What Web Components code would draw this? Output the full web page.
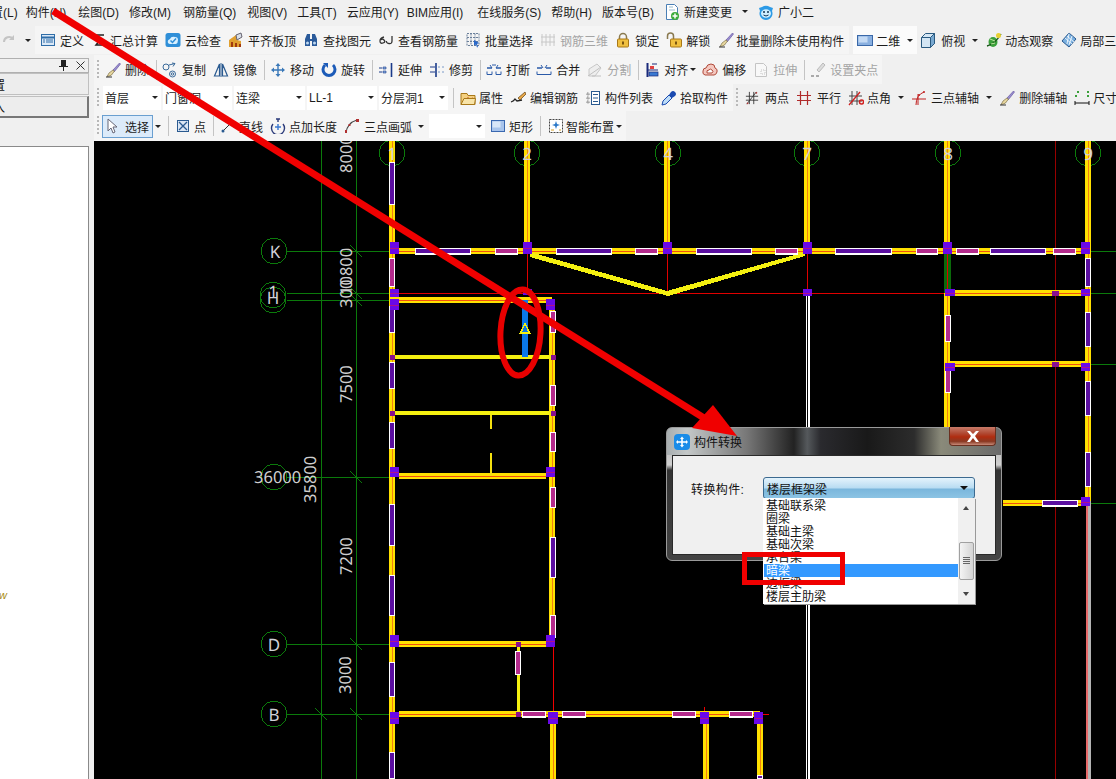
<!DOCTYPE html>
<html lang="zh">
<head>
<meta charset="utf-8">
<title>构件转换</title>
<style>
  html, body { margin: 0; padding: 0; background: #f0f0f0; overflow: hidden; }
</style>
</head>
<body>
<gld-app>
  <menu-bar slot="menu">
    <span style="margin-left:-9px">置(L)</span><span style="margin-left:-2px">构件(N)</span><span style="margin-left:2px">绘图(D)</span><span>修改(M)</span><span style="margin-left:2px">钢筋量(Q)</span><span style="margin-left:1px">视图(V)</span><span>工具(T)</span><span>云应用(Y)</span><span style="margin-left:-2px">BIM应用(I)</span><span style="margin-left:4px">在线服务(S)</span><span>帮助(H)</span><span>版本号(B)</span>
    <tool-btn icon="newdoc">新建变更</tool-btn><tool-arrow></tool-arrow>
    <tool-btn icon="xiaoer">广小二</tool-btn>
  </menu-bar>

  <tool-row slot="top" style="height:28px">
    <tool-icon name="redo" style="margin-left:1px"></tool-icon>
    <tool-arrow style="margin:0 4px 0 8px"></tool-arrow>
    <tool-bar style="--pad:5px">
      <tool-btn icon="define">定义</tool-btn>
      <tool-btn icon="sum" style="--tg:2px;margin-left:1px">汇总计算</tool-btn>
      <tool-btn icon="cloud">云检查</tool-btn>
      <tool-btn icon="flat">平齐板顶</tool-btn>
      <tool-btn icon="find">查找图元</tool-btn>
      <tool-btn icon="rebar">查看钢筋量</tool-btn>
      <tool-btn icon="batch">批量选择</tool-btn>
      <tool-btn icon="r3d" disabled>钢筋三维</tool-btn>
      <tool-btn icon="lock">锁定</tool-btn>
      <tool-btn icon="unlock">解锁</tool-btn>
      <tool-btn icon="erase" style="--tg:2px;margin-left:1px">批量删除未使用构件</tool-btn>
    </tool-bar>
    <tool-bar style="--pad:4px;--bg:#fbfbfb;margin-left:4px;width:64px;box-sizing:border-box">
      <tool-btn icon="view2d" style="--tg:3px">二维</tool-btn><tool-arrow></tool-arrow>
    </tool-bar>
    <tool-btn icon="cube" style="margin-left:3px;--tg:5px">俯视</tool-btn><tool-arrow style="margin:0 8px 0 7px"></tool-arrow>
    <tool-btn icon="orbit" style="--tg:3px">动态观察</tool-btn>
    <tool-btn icon="local3d" style="margin-left:8px;--tg:3px">局部三维</tool-btn>
  </tool-row>

  <side-panel slot="side"></side-panel>

  <tool-row slot="rows" style="height:30px;padding-top:1px">
    <tool-bar grip style="--gap:7px">
      <tool-btn icon="erase" style="margin-left:-1px">删除</tool-btn><tool-sep></tool-sep>
      <tool-btn icon="copy" style="margin-left:-1px">复制</tool-btn>
      <tool-btn icon="mirror">镜像</tool-btn><tool-sep></tool-sep>
      <tool-btn icon="move" style="margin-left:-1px">移动</tool-btn>
      <tool-btn icon="rotate">旋转</tool-btn><tool-sep></tool-sep>
      <tool-btn icon="extend" style="margin-left:-1px">延伸</tool-btn>
      <tool-btn icon="trim">修剪</tool-btn><tool-sep></tool-sep>
      <tool-btn icon="break" style="margin-left:-1px">打断</tool-btn>
      <tool-btn icon="merge" style="margin-left:-1px">合并</tool-btn>
      <tool-btn icon="split" disabled>分割</tool-btn><tool-sep></tool-sep>
      <tool-btn icon="align" style="margin-left:-1px">对齐<tool-arrow style="margin-left:-2px"></tool-arrow></tool-btn>
      <tool-btn icon="offset" style="margin-left:-1px">偏移</tool-btn>
      <tool-btn icon="stretch" disabled>拉伸</tool-btn><tool-sep></tool-sep>
      <tool-btn icon="grips" disabled style="margin-left:-1px">设置夹点</tool-btn>
    </tool-bar>
  </tool-row>

  <tool-row slot="rows" style="height:27px">
    <tool-bar grip style="--gap:2px">
      <tool-combo style="width:58px;margin-left:2px">首层</tool-combo>
      <tool-combo style="width:69px">门窗洞</tool-combo>
      <tool-combo style="width:71px">连梁</tool-combo>
      <tool-combo style="width:70px">LL-1</tool-combo>
      <tool-combo style="width:69px">分层洞1</tool-combo>
      <tool-sep style="margin:0 4px 0 3px"></tool-sep>
      <tool-btn icon="attr" style="--tg:3px">属性</tool-btn>
      <tool-btn icon="editbar" style="margin-left:5px">编辑钢筋</tool-btn>
      <tool-btn icon="list" style="margin-left:5px">构件列表</tool-btn>
      <tool-btn icon="pick" style="margin-left:6px;--tg:3px;margin-right:1px">拾取构件</tool-btn>
    </tool-bar>
    <tool-bar grip style="--bg:transparent;--gap:7px">
      <tool-btn icon="twopt" style="--tg:6px;--iw:14px">两点</tool-btn>
      <tool-btn icon="parallel" style="--tg:5px">平行</tool-btn>
      <tool-btn icon="angle" style="--tg:3px">点角<tool-arrow style="margin-left:4px"></tool-arrow></tool-btn>
      <tool-btn icon="arcaxis">三点辅轴<tool-arrow style="margin-left:3px"></tool-arrow></tool-btn>
      <tool-btn icon="erase">删除辅轴</tool-btn>
      <tool-btn icon="dim" style="--tg:3px">尺寸</tool-btn>
    </tool-bar>
  </tool-row>

  <tool-row slot="rows" style="height:30px">
    <tool-bar grip style="--gap:7px">
      <tool-btn icon="cursor" active style="margin-left:-4px">选择</tool-btn><tool-arrow style="margin-left:-5px"></tool-arrow><tool-sep></tool-sep>
      <tool-btn icon="point" style="--tg:3px">点</tool-btn><tool-sep></tool-sep>
      <tool-btn icon="line" style="--tg:3px">直线</tool-btn>
      <tool-btn icon="ptlen" style="--tg:3px">点加长度</tool-btn>
      <tool-btn icon="arc">三点画弧<tool-arrow style="margin-left:2px"></tool-arrow></tool-btn>
      <tool-combo style="width:56px;margin-left:-2px"></tool-combo>
      <tool-btn icon="rect" style="margin-left:-2px;--tg:3px">矩形</tool-btn><tool-sep></tool-sep>
      <tool-btn icon="smart" style="margin-left:1px;--tg:2px">智能布置<tool-arrow></tool-arrow></tool-btn>
    </tool-bar>
  </tool-row>

  <cad-canvas slot="canvas"></cad-canvas>
  <convert-dialog slot="over"></convert-dialog>
  <red-marks slot="over"></red-marks>
</gld-app>

<script>
// icons, all on a 16x16 box
const ICONS = {
  redo: '<path d="M3 10a5 5 0 0 1 9-3" fill="none" stroke="#c4c4c4" stroke-width="2"/><path d="M13 3v5H8z" fill="#c4c4c4"/>',
  newdoc: '<path d="M2.5.5h8l3 3v12h-11z" fill="#fff" stroke="#4a7fb5"/><path d="M5 3h4M5 6h6" stroke="#9bc"/><circle cx="11" cy="12" r="4" fill="#3cab3c"/><path d="M11 9.5v5M8.500 12h5" stroke="#fff" stroke-width="1.500"/>',
  xiaoer: '<path d="M1 4l3-1a8 8 0 0 1 8 0l3 1-1 3a6.500 6.500 0 1 1-12 0z" fill="#2c9ae6"/><ellipse cx="8" cy="9.500" rx="5" ry="4.200" fill="#cfeeff"/><circle cx="6" cy="8" r="1" fill="#135"/><circle cx="10" cy="8" r="1" fill="#135"/><path d="M5.500 11q2.500 2 5 0" stroke="#135" fill="none"/>',
  define: '<rect x="1.500" y="2.500" width="13" height="11" fill="#dbe9f7" stroke="#2f6da8"/><path d="M1.500 5.500h13" stroke="#2f6da8" stroke-width="2"/><path d="M6 8h7M6 10h7M3 8h2M3 10h2" stroke="#2f6da8"/>',
  sum: '<path d="M12 3H4l4 5-4 5h8" fill="none" stroke="#222" stroke-width="1.500"/>',
  cloud: '<rect x=".5" y="1" width="15" height="14" rx="2.500" fill="#2f8fd8"/><path d="M3 11q-1-3 2-4 1-3 5-2 3 0 3 3t-2 4H5q-1 0-2-1z" fill="#d8f0ff"/><path d="M5.500 8.500l2 2 3.500-4" fill="none" stroke="#2f8fd8" stroke-width="1.500"/>',
  flat: '<path d="M1 15V8l7-5 5-2 1 4-5 3 4 1v6z" fill="#e0a030"/><path d="M8 3l5-2 1 4-5 3z" fill="#d9dfe8" stroke="#667"/><path d="M3 15v-5h2v5zM7 15v-4h2v4zM11 15v-3h2v3z" fill="#a03a10"/>',
  find: '<path d="M2 7l2-5h3v5h2V2h3l2 5v7H9V9H7v5H2z" fill="#2a5a9a"/><circle cx="4.500" cy="11" r="1.500" fill="#bfd8f0"/><circle cx="11.500" cy="11" r="1.500" fill="#bfd8f0"/>',
  rebar: '<path d="M6 5Q2 6 2 9t3 2 1-3-3 0M14 4v5q0 3-3 2.500T8.500 9" fill="none" stroke="#333" stroke-width="1.300"/>',
  batch: '<path d="M2 1.500h12v12H2zM2 5.500h12M2 9.500h12M6 1.500v12M10 1.500v12" fill="none" stroke="#6a7f9a" stroke-dasharray="2 1"/><path d="M9 8l5 3-2 1 1 3-1 .500-1-3-2 1z" fill="#2a68c8"/>',
  r3d: '<path d="M2 2v12M6 2v12M10 2v12M14 2v12M1 5h14M1 10h14" stroke="#c8c8c8"/>',
  lock: '<path d="M4.500 7V5a3.500 3.500 0 0 1 7 0v2" fill="none" stroke="#8a7a50" stroke-width="1.500"/><rect x="2.500" y="7" width="11" height="8" rx="1" fill="#f0c040" stroke="#a87818"/><rect x="7" y="9.500" width="2" height="3" fill="#7a5510"/>',
  unlock: '<path d="M1.500 7V4a3 3 0 0 1 6 0v3" fill="none" stroke="#8a7a50" stroke-width="1.500"/><rect x="4.500" y="7" width="11" height="8" rx="1" fill="#f0c040" stroke="#a87818"/><rect x="9" y="9.500" width="2" height="3" fill="#7a5510"/>',
  erase: '<path d="M14.500 1L8 8l1.500 1.500L15.500 2z" fill="#9a8fd0" stroke="#5a4a9a" stroke-width=".6"/><path d="M8 8l-4 3q-1 2-2 3.500 3-.5 4.500-1.500l3-4z" fill="#e8d8a0" stroke="#6a5a30" stroke-width=".6"/><path d="M1 15h6" stroke="#333"/>',
  view2d: '<rect x=".5" y="3.500" width="15" height="10" fill="#8ab0e0" stroke="#3a68a8"/><rect x="1.500" y="4.500" width="9" height="6" fill="#c4daf4"/>',
  cube: '<path d="M1.500 5.500l4-4h9v10l-4 4h-9z" fill="#d4e6f4" stroke="#2a5a80"/><path d="M1.500 5.500h9v10l4-4v-10l-4 4" fill="#78a8d0" stroke="#2a5a80"/>',
  orbit: '<ellipse cx="7" cy="10" rx="4.500" ry="5" fill="#3aa03a"/><path d="M1 14Q9 12 15 2" fill="none" stroke="#1a5a1a" stroke-width="1.400"/><circle cx="12.500" cy="3.500" r="2.500" fill="#e8d030"/><path d="M4 7l5 2M5 12l4-1" stroke="#bfe8a0"/>',
  local3d: '<path d="M1 9l7-8 7 6-7 8z" fill="#7ab0e0" stroke="#2a5a90"/><path d="M4 6l7 6M6 4l7 6M8 1.500L6 12M11 4l-3 9" stroke="#fff" stroke-width=".8"/>',
  copy: '<circle cx="4" cy="5" r="3" fill="none" stroke="#3a6a9a"/><circle cx="10.500" cy="12" r="3" fill="none" stroke="#3a6a9a"/><circle cx="10.500" cy="12" r="1.200" fill="none" stroke="#3a6a9a"/><path d="M7 3l6-1.500M13 1.500l-2 3M13 1.500l-3-.500" stroke="#3a6a9a" fill="none"/>',
  mirror: '<path d="M6.500 2L1.500 14h5zM9.500 2l5 12h-5z" fill="none" stroke="#2a5a90" stroke-width="1.200"/><path d="M8 1v14" stroke="#2a5a90"/>',
  move: '<path d="M8 1l2.500 3H8.700v3.300H12V5.500L15 8l-3 2.500V8.700H8.700V12h1.800L8 15l-2.500-3h1.800V8.700H4v1.800L1 8l3-2.500v1.800h3.300V4H5.500z" fill="#3a78b8"/>',
  rotate: '<path d="M4 3a6 6 0 1 0 8 0" fill="none" stroke="#1c5bb8" stroke-width="3"/><path d="M2 1h5v5z" fill="#1c5bb8"/>',
  extend: '<path d="M13.500 1v14" stroke="#1a3a8a" stroke-width="1.600"/><path d="M1 6h3M1 10h3" stroke="#1a3a8a"/><path d="M5 5h3v2H5zM5 9h3v2H5z" fill="#8ab0e0" stroke="#1a3a8a" stroke-width=".6"/>',
  trim: '<path d="M7 1v14" stroke="#1a3a8a" stroke-width="1.600"/><path d="M1 5h5M1 10h5" stroke="#1a3a8a"/><path d="M9 5h2M13 5h2M9 10h2M13 10h2" stroke="#7a9ac8"/>',
  break: '<path d="M1 9.500v3h5v-3M10 9.500v3h5v-3" fill="none" stroke="#2a5aa8"/><path d="M1 6h5M10 6h5" stroke="#2a5aa8" stroke-width="1.300"/><path d="M4 3l2 3M12 3l-2 3M6 3h4" stroke="#2a5aa8"/>',
  merge: '<path d="M1 9.500v3h14v-3" fill="none" stroke="#2a5aa8"/><path d="M1 6h5M10 6h5" stroke="#2a5aa8" stroke-width="1.300"/><path d="M5 3l2 3M11 3l-2 3" stroke="#2a5aa8"/>',
  split: '<path d="M2 14V7l8-5 4 4-6 8z" fill="#eee" stroke="#c8c8c8"/><path d="M1 14l13-9M5 14h9" stroke="#c0c0c0"/>',
  align: '<path d="M3.500 1v14" stroke="#1a2a7a" stroke-width="2"/><path d="M4 8h10M8 2h5" stroke="#1a2a7a"/><rect x="5" y="10" width="9" height="4" fill="#3a78d0" stroke="#1a2a7a" stroke-width=".7"/><rect x="6" y="4" width="4" height="3" fill="#e04040"/>',
  offset: '<path d="M3 13q-3-1-2-4 0-3 3-3 1-4 5-4t4 4q3 1 2 4t-3 3z" fill="#f4c8c0" stroke="#b04a3a"/><path d="M5 11q-1-3 2-3 1-2 3 0 2 1 0 3z" fill="#fff" stroke="#b04a3a"/>',
  stretch: '<path d="M2.500 1.500h8l3 3v10h-11z" fill="#f8f8f8" stroke="#c4c4c4"/><path d="M8 8h4v4H8z" fill="none" stroke="#c4c4c4" stroke-dasharray="1 1"/>',
  grips: '<path d="M13 1l-6 7 2 2 6-7z" fill="#ddd" stroke="#bbb"/><path d="M1 14h3M6 14h3" stroke="#aaa" stroke-width="2"/>',
  attr: '<path d="M1 3.500h6l1 2h7v9H1z" fill="#f4d080" stroke="#a87818"/><path d="M4 11l4-3 1 2 4-2" fill="none" stroke="#c04020" stroke-width="1.200"/><path d="M1 14.500l3-6h11.500l-1 6z" fill="#f8e4a8" stroke="#a87818"/>',
  editbar: '<path d="M1 12q3-1 4-3l2 2 5-1" fill="none" stroke="#222" stroke-width="1.300"/><path d="M15 2L8 8l2 2 6-6z" fill="#e8a848" stroke="#604010" stroke-width=".7"/>',
  list: '<path d="M2 3h2v2H2zM2 7h2v2H2zM2 11h2v2H2z" fill="none" stroke="#555" stroke-width=".7" stroke-dasharray="1 .5"/><rect x="6.500" y="1.500" width="8" height="13" fill="#fff" stroke="#2a5a90"/><path d="M8 4.500h5M8 8h5M8 11.500h5" stroke="#2a5a90"/>',
  pick: '<path d="M14 2q-2-2-4 0l-2 3 3 3 3-2q2-2 0-4z" fill="#1a4ab0"/><path d="M8 5L2 11l-1 4 4-1 6-6z" fill="#bcdcf8" stroke="#1a4ab0"/>',
  twopt: '<path d="M2 15L13 1M1 6h14M1 10.500h14" stroke="#333" fill="none"/><path d="M5 1v14M10 1v14" stroke="#333"/><circle cx="3" cy="14" r="1" fill="#a33"/><circle cx="13" cy="2" r="1" fill="#a33"/>',
  parallel: '<path d="M4.500 1v14M11.500 1v14M1 5.500h14M1 10.500h14" stroke="#b02a2a" stroke-width="1.200"/>',
  angle: '<path d="M4 1v14M9 1v14M1 6h13M1 11h13" stroke="#444"/><path d="M1 15L12 2" stroke="#d02020" stroke-width="1.300"/><circle cx="13.500" cy="12" r="2" fill="none" stroke="#d02020" stroke-width="1.500"/>',
  arcaxis: '<path d="M5 15Q5 5 13 2M1 9h14M7 4v11" fill="none" stroke="#c02020"/><circle cx="13" cy="2" r="1" fill="#c02020"/><circle cx="8" cy="5" r="1" fill="#c02020"/>',
  dim: '<path d="M1 11v4M15 11v4M1 13h14" stroke="#111"/><path d="M3 2h2M13 2h2M1 6h2M13 6h2" stroke="#3aa03a" stroke-width="2"/>',
  cursor: '<path d="M4 1v12l3-3 2 5 2-1-2-5h4z" fill="#fff" stroke="#667"/>',
  point: '<rect x="2.500" y="2.500" width="11" height="11" fill="#dbe6f4" stroke="#2a5a90"/><path d="M4 4l8 8M12 4l-8 8" stroke="#2a5a90" stroke-width="1.300"/>',
  line: '<path d="M2 14L14 2" stroke="#333"/><circle cx="3" cy="13" r="1.500" fill="#2a5a90"/>',
  ptlen: '<path d="M3 6a6.500 6.500 0 1 0 10 0" fill="none" stroke="#2a3a7a" stroke-width="1.400"/><path d="M8 1v3M6 1h4" stroke="#2a3a7a" stroke-width="1.400"/><path d="M5 9h6M8 6v6" stroke="#3a78d0" stroke-width="1.400"/>',
  arc: '<path d="M2 15Q3 5 13 2" fill="none" stroke="#444" stroke-width="1.200"/><rect x="12" y="1" width="3" height="3" fill="#b03030"/><rect x="1" y="12" width="2" height="3" fill="#b03030"/><rect x="4.500" y="6" width="2" height="2" fill="#b03030"/>',
  rect: '<rect x="1.500" y="2.500" width="13" height="11" fill="#a8c4ec" stroke="#3a68b0"/><rect x="2.500" y="3.500" width="8" height="6" fill="#d8e6f8"/>',
  smart: '<rect x="1.500" y="1.500" width="13" height="13" fill="#fff" stroke="#444" stroke-dasharray="2 1"/><path d="M8 3l1 3 3 1-3 1-1 3-1-3-3-1 3-1z" fill="#2a78c8"/><path d="M3 12h3M11 12h2" stroke="#d8a020"/>'
};

class ToolIcon extends HTMLElement {
  connectedCallback() {
    if (this.shadowRoot) return;
    const root = this.attachShadow({mode: "open"});
    root.innerHTML = `
      <style>
        :host { display: inline-flex; flex: none; width: var(--iw, 16px); height: 16px; }
        svg { display: block; width: 100%; height: 100%; }
      </style>
      <svg viewBox="0 0 16 16">${ICONS[this.getAttribute("name")] || ""}</svg>`;
  }
}
customElements.define("tool-icon", ToolIcon);

class ToolArrow extends HTMLElement {
  connectedCallback() {
    if (this.shadowRoot) return;
    this.attachShadow({mode: "open"}).innerHTML = `
      <style>
        :host { display: inline-block; flex: none; width: 0; height: 0;
                border: 3px solid transparent; border-top: 3px solid #222; border-bottom: 0; vertical-align: middle; }
      </style>`;
  }
}
customElements.define("tool-arrow", ToolArrow);

class ToolSep extends HTMLElement {
  connectedCallback() {
    if (this.shadowRoot) return;
    this.attachShadow({mode: "open"}).innerHTML = `
      <style>
        :host { display: block; flex: none; width: 1px; height: 20px; background: #c4c4c4; margin-right: -1px; }
      </style>`;
  }
}
customElements.define("tool-sep", ToolSep);

class ToolBtn extends HTMLElement {
  connectedCallback() {
    if (this.shadowRoot) return;
    const root = this.attachShadow({mode: "open"});
    root.innerHTML = `
      <style>
        :host { display: inline-flex; flex: none; align-items: center; gap: var(--tg, 4px);
                font: 12px "Liberation Sans", "Noto Sans CJK SC", sans-serif; color: #1c1c1c; white-space: nowrap; }
        :host([disabled]) { color: #a4a4a4; }
        :host([active]) { background: #dcebfa; box-shadow: inset 0 0 0 1px #6a9fd0; height: 23px; padding: 0 2px 0 2px; box-sizing: border-box; width: 51px; --tg: 5px; }
      </style>
      <tool-icon name="${this.getAttribute("icon")}"></tool-icon><slot></slot>`;
  }
}
customElements.define("tool-btn", ToolBtn);

class ToolCombo extends HTMLElement {
  connectedCallback() {
    if (this.shadowRoot) return;
    const root = this.attachShadow({mode: "open"});
    root.innerHTML = `
      <style>
        :host { display: flex; flex: none; align-items: center; justify-content: space-between; height: 24px;
                box-sizing: border-box; padding: 0 3px 0 2px; background: #fff;
                font: 12px "Liberation Sans", "Noto Sans CJK SC", sans-serif; color: #1c1c1c; white-space: nowrap; }
      </style>
      <span><slot></slot></span><tool-arrow></tool-arrow>`;
  }
}
customElements.define("tool-combo", ToolCombo);

class ToolBar extends HTMLElement {
  connectedCallback() {
    if (this.shadowRoot) return;
    const root = this.attachShadow({mode: "open"});
    root.innerHTML = `
      <style>
        :host { display: flex; align-items: center; gap: var(--gap, 7px); height: 100%; flex: none;
                box-sizing: border-box; padding: 0 var(--pad, 4px); background: var(--bg, #f5f5f5); }
        .grip { width: 2px; height: 20px; margin-left: -1px;
                background: repeating-linear-gradient(#b8b8b8 0 2px, transparent 2px 4px); }
        :host(:not([grip])) .grip { display: none; }
      </style>
      <div class="grip"></div><slot></slot>`;
  }
}
customElements.define("tool-bar", ToolBar);

class ToolRow extends HTMLElement {
  connectedCallback() {
    if (this.shadowRoot) return;
    this.attachShadow({mode: "open"}).innerHTML = `
      <style>
        :host { display: flex; align-items: center; box-sizing: border-box; white-space: nowrap;
                font: 12px "Liberation Sans", "Noto Sans CJK SC", sans-serif; color: #1c1c1c; }
        ::slotted(tool-bar) { height: 100%; }
      </style>
      <slot></slot>`;
  }
}
customElements.define("tool-row", ToolRow);

class MenuBar extends HTMLElement {
  connectedCallback() {
    if (this.shadowRoot) return;
    this.attachShadow({mode: "open"}).innerHTML = `
      <style>
        :host { display: flex; align-items: center; gap: 10px; height: 23px; margin-bottom: 3px; white-space: nowrap;
                font: 12px "Liberation Sans", "Noto Sans CJK SC", sans-serif; color: #1c1c1c; }
      </style>
      <slot></slot>`;
  }
}
customElements.define("menu-bar", MenuBar);

class SidePanel extends HTMLElement {
  connectedCallback() {
    if (this.shadowRoot) return;
    this.attachShadow({mode: "open"}).innerHTML = `
      <style>
        :host { display: flex; flex-direction: column; box-sizing: border-box; width: 94px; height: 100%;
                padding: 4px 5px 0 0; background: #f0f0f0; overflow: hidden;
                font: 12px "Liberation Sans", "Noto Sans CJK SC", sans-serif; color: #111; }
        .title { display: flex; align-items: center; justify-content: flex-end; gap: 8px; height: 15px; box-sizing: border-box;
                 border: 1px solid #b0b0b0; border-left: 0; padding-right: 3px; }
        .tab { height: 22px; box-sizing: border-box; border: 1px solid #c0c0c0; border-left: 0; background: #ededed;
               display: flex; align-items: center; margin-left: -7px; padding-left: 0; }
        .tab.on { border-right: 2px solid #777; border-bottom: 2px solid #777; margin-top: 1px; }
        .gap { height: 28px; }
        .tree { flex: 1; background: #fff; border-top: 1px solid #8a8a8a; border-right: 1px solid #8a8a8a; position: relative; }
        .tree span { display: block; }
        .paren { margin: 33px 0 0 -5px; }
        .w { margin: 395px 0 0 -1px; color: #a88a10; font-style: italic; font-size: 11px; }
      </style>
      <div class="title">
        <svg width="9" height="11" viewBox="0 0 9 11"><path d="M2 0h5v6h2v1H5v4H4V7H0V6h2z" fill="#222"/></svg>
        <svg width="9" height="9" viewBox="0 0 9 9"><path d="M.5.5l8 8M8.500.5l-8 8" stroke="#333"/></svg>
      </div>
      <div class="tab">置</div>
      <div class="tab on">入</div>
      <div class="gap"></div>
      <div class="tree"><span class="paren">)</span><span class="w">w</span></div>`;
  }
}
customElements.define("side-panel", SidePanel);

// floor plan, drawn in page coordinates through the viewBox
class CadCanvas extends HTMLElement {
  connectedCallback() {
    if (this.shadowRoot) return;
    const out = [];
    const rect = (x, y, w, h, c) => out.push(`<rect x="${x}" y="${y}" width="${w}" height="${h}" fill="${c}"/>`);
    const PURPLE = "#5a0ea0", PINK = "#b42a8c";
    const vBeam = (x, a, b) => { rect(x - 3, a, 6, b - a, "#ffe000"); rect(x, a, 1, b - a, "#f08010"); };
    const hBeam = (y, a, b) => { rect(a, y - 3, b - a, 6, "#ffe000"); rect(a, y, b - a, 1, "#f05010"); };
    const vSeg = (x, a, b, c) => { rect(x - 3, a, 6, b - a, "#fff"); rect(x - 2, a + 1, 4, b - a - 2, c); };
    const hSeg = (y, a, b, c) => { rect(a, y - 3, b - a, 7, "#fff"); rect(a + 1, y - 2, b - a - 2, 4, c); };
    const node = (a, b, c, d) => { rect(a, b, c - a, d - b, "#6a08e8"); rect(a, Math.round((b + d) / 2), c - a, 1, "#b0108a"); };
    const dot = (x, y) => rect(x - 2, y - 2, 5, 5, "#8a1090");
    const green = (x1, y1, x2, y2) => out.push(`<line x1="${x1}" y1="${y1}" x2="${x2}" y2="${y2}" stroke="#0b7a0b"/>`);
    const tick = (x, y) => green(x - 6, y - 6, x + 6, y + 6);
    const head = (cx, cy) => {
      const pts = [];
      for (let i = 0; i < 12; i++) pts.push((cx + 13 * Math.cos(i * Math.PI / 6)).toFixed(1) + "," + (cy + 13 * Math.sin(i * Math.PI / 6)).toFixed(1));
      out.push(`<polygon points="${pts.join(" ")}" fill="none" stroke="#0b7a0b"/>`);
    };
    const label = (x, y, t) => out.push(`<text x="${x}" y="${y}" text-anchor="middle" dominant-baseline="central" class="lab">${t}</text>`);
    const dim = (x, y, t) => out.push(`<text transform="translate(${x} ${y}) rotate(-90)" class="dim">${t}</text>`);

    // grid
    green(321, 141, 321, 779); green(356, 141, 356, 779);
    [251, 293, 300, 477, 644, 714].forEach(y => green(287, y, 393, y));
    [251, 293, 364, 503].forEach(y => green(1090, y, 1116, y));
    [251, 293, 300, 477, 644, 714].forEach(y => tick(356, y));
    tick(321, 714);
    [[274, 251], [273, 295], [273, 300], [274, 644], [274, 714], [274, 477]].forEach(p => head(p[0], p[1]));
    [392, 527, 668, 807, 948, 1088].forEach(x => head(x, 153));

    // thin red axis lines
    rect(1055, 141, 1, 638, "#980000");
    rect(393, 293, 554, 1, "#e00000");
    rect(527, 254, 1, 40, "#e00000"); rect(667, 254, 1, 40, "#e00000"); rect(807, 254, 1, 40, "#e00000");
    rect(553, 644, 1, 70, "#f00000");
    rect(704, 707, 1, 8, "#f00000"); rect(760, 714, 9, 1, "#f00000");

    // columns
    [392].forEach(x => vBeam(x, 141, 779));
    [527, 667, 807, 947].forEach(x => vBeam(x, 141, 251));
    vBeam(1088, 141, 501); vBeam(947, 293, 430); vBeam(552, 300, 644);
    vBeam(553, 718, 779); vBeam(706, 718, 779); vBeam(760, 718, 779);
    rect(944, 254, 7, 39, "#0a6a0a"); rect(947, 254, 1, 39, "#e00000");
    // white double wall under axis 7
    rect(806, 296, 4, 483, "#fff"); rect(807, 296, 1, 483, "#000");
    // pink and grey wall on axis 9
    rect(1086, 501, 2, 278, "#e86a6a"); rect(1088, 501, 3, 278, "#b4b4b4");

    // beams
    hBeam(251, 392, 1088); hBeam(300, 392, 552); hBeam(293, 951, 1088); hBeam(364, 950, 1088);
    hBeam(476, 399, 546); hBeam(644, 399, 546); hBeam(714, 399, 760); hBeam(503, 1003, 1085);
    rect(395, 355, 157, 4, "#f4f010"); rect(395, 411, 157, 4, "#f4f010");
    rect(490, 415, 2, 14, "#f4e010"); rect(490, 453, 2, 23, "#f4e010");
    rect(517, 647, 3, 67, "#f4f010");
    out.push(`<path d="M530 252L667 291 805 252 805 256 668 296 530 257z" fill="#f4f010"/>`);

    // openings
    [[162, 205, PURPLE], [258, 287, PINK], [306, 333, PURPLE], [362, 389, PURPLE], [422, 449, PURPLE],
     [504, 546, PURPLE], [575, 616, PURPLE], [662, 697, PURPLE], [752, 779, PURPLE]].forEach(s => vSeg(392, s[0], s[1], s[2]));
    [[311, 333], [385, 406], [432, 452], [487, 508], [615, 638]].forEach(s => vSeg(553, s[0], s[1], PINK));
    vSeg(553, 537, 578, PURPLE);
    vSeg(518, 651, 675, PINK);
    [[258, 287], [312, 347], [381, 416], [452, 487]].forEach(s => vSeg(1088, s[0], s[1], PURPLE));
    vSeg(948, 315, 342, PINK); vSeg(948, 368, 393, PINK);
    vSeg(760, 775, 779, PURPLE);
    [[415, 471, PURPLE], [495, 518, PINK], [556, 612, PURPLE], [635, 658, PINK], [696, 752, PURPLE], [775, 798, PINK],
     [835, 892, PURPLE], [916, 938, PINK], [956, 979, PINK], [990, 1046, PURPLE], [1053, 1076, PINK]].forEach(s => hSeg(251, s[0], s[1], s[2]));
    [[522, 546], [562, 586], [672, 696], [729, 753]].forEach(s => hSeg(714, s[0], s[1], PINK));
    hSeg(503, 1042, 1078, PURPLE);

    // nodes
    [392 - 2, 523, 663, 803, 943, 1081].forEach(x => node(x, 242, x + 9, 254));
    [[390, 289, 399, 297], [390, 299, 399, 310], [546, 299, 555, 310], [523, 289, 532, 295], [803, 289, 812, 296],
     [945, 289, 955, 296], [1081, 289, 1090, 296], [945, 363, 955, 371], [1081, 363, 1090, 371],
     [390, 467, 399, 477], [546, 467, 555, 477], [1081, 497, 1090, 506],
     [390, 635, 399, 647], [546, 635, 555, 647], [390, 712, 399, 724], [548, 712, 558, 724],
     [700, 712, 709, 724], [754, 712, 763, 724]].forEach(n => node(n[0], n[1], n[2], n[3]));
    [[392, 357], [553, 357], [392, 413], [553, 413], [518, 644], [518, 714]].forEach(p => dot(p[0], p[1]));
    rect(1052, 291, 7, 5, "#8a1090"); rect(1052, 362, 7, 5, "#8a1090");

    // selected beam
    rect(522, 300, 6, 57, "#0a78e8");
    out.push(`<path d="M525 323.500L520.500 333h9z" fill="#0a78e8" stroke="#f4f010" stroke-width="1.500"/>`);

    // labels
    label(275, 251, "K"); label(274, 638 + 6, "D"); label(274, 714, "B");
    label(273, 297, "H"); out.push(`<text x="273" y="291" text-anchor="middle" dominant-baseline="central" class="lab">1</text>`);
    [[392, "1"], [527, "2"], [668, "4"], [807, "7"], [948, "8"], [1088, "9"]].forEach(l => label(l[0], 153, l[1]));
    dim(352, 173, "8000"); dim(352, 295, "10800"); dim(352, 308, "300"); dim(352, 403, "7500");
    dim(352, 575, "7200"); dim(351, 694, "3000"); dim(316, 503, "35800");
    out.push(`<text x="254" y="483" class="dim">36000</text>`);

    this.attachShadow({mode: "open"}).innerHTML = `
      <style>
        :host { display: block; width: 1022px; height: 638px; background: #000; overflow: hidden; }
        svg { display: block; shape-rendering: crispEdges; }
        text { text-rendering: geometricPrecision; }
        .dim { font: 16.500px "Noto Sans", sans-serif; fill: #cfcfcf; }
        .lab { font: 17px "Noto Sans", sans-serif; fill: #d0d0d8; }
      </style>
      <svg width="1022" height="638" viewBox="94 141 1022 638">${out.join("")}</svg>`;
  }
}
customElements.define("cad-canvas", CadCanvas);

class ConvertDialog extends HTMLElement {
  connectedCallback() {
    if (this.shadowRoot) return;
    const items = ["基础联系梁", "圈梁", "基础主梁", "基础次梁", "承台梁", "暗梁", "边框梁", "楼层主肋梁"];
    this.attachShadow({mode: "open"}).innerHTML = `
      <style>
        :host { position: absolute; left: 666px; top: 427px; width: 336px; height: 134px; box-sizing: border-box;
                border-radius: 6px; border: 1px solid #9a9a9a; z-index: 2;
                background:
                  linear-gradient(90deg, #a8aeb0 0, #c4c8c8 6%, #777 24%, #222 38%, #55595c 42%, #2a2a2e 46%, #191919 60%, #2c2c2c 74%, #8a8a7a 82%, #6a6a6a 100%) top / 100% 27px no-repeat,
                  linear-gradient(#aaa 0, #d0d0d0 28%, #333 32%, #444 100%);
                font: 12px "Liberation Sans", "Noto Sans CJK SC", sans-serif; color: #111; }
        .bar { display: flex; align-items: center; gap: 4px; height: 27px; padding: 0 5px 0 7px; }
        .logo { width: 16px; height: 16px; flex: none; }
        .close { margin-left: auto; align-self: flex-start; width: 47px; height: 19px; box-sizing: border-box; margin-top: -1px;
                 display: flex; align-items: center; justify-content: center;
                 border: 1px solid #6a3020; border-top: 0; border-radius: 0 0 4px 4px;
                 background: linear-gradient(#c87a68 0, #b04a34 35%, #b02c10 55%, #8a3a24 80%, #c88a78 100%); }
        .client { position: relative; margin: 0 5px; height: 100px; box-sizing: border-box;
                  border: 1px solid #2a2a2a; background: #f0f0f0; }
        .row { display: flex; align-items: center; padding: 21px 0 0 18px; }
        .row label { width: 72px; letter-spacing: .400px; }
        .combo { width: 212px; height: 22px; box-sizing: border-box; border: 1px solid #3c6a90; border-radius: 3px;
                 display: flex; align-items: center; justify-content: space-between; padding: 0 6px 0 3px;
                 background: linear-gradient(#e4f3fc 0, #b8dcf2 50%, #7ab6dc 55%, #8cc4e4 100%); }
        .combo i { width: 0; height: 0; border: 4px solid transparent; border-top: 4px solid #111; border-bottom: 0; }
        .drop { position: absolute; left: 90px; top: 42px; width: 212px; height: 106px; display: flex; background: #fff;
                box-shadow: 1px 1px 0 #999; overflow: hidden; }
        .opts { flex: 1; padding: 1px 0 0 1px; overflow: hidden; }
        .opts div { height: 13px; line-height: 15px; padding-left: 2px; }
        .opts .sel { background: #3399ff; color: #fff; }
        .sb { width: 17px; flex: none; background: #f0f0f0; display: flex; flex-direction: column; align-items: center; position: relative; }
        .up, .dn { position: absolute; left: 5px; width: 0; height: 0; border: 3px solid transparent; }
        .up { top: 8px; border-bottom: 4px solid #444; border-top: 0; }
        .dn { bottom: 8px; border-top: 4px solid #444; border-bottom: 0; }
        .thumb { position: absolute; left: 1px; top: 44px; width: 13px; height: 36px; border: 1px solid #a0a0a0; border-radius: 2px;
                 background: linear-gradient(90deg, #f4f4f4, #d4d4d4); }
        .thumb::after { content: ""; position: absolute; left: 3px; top: 14px; width: 7px; height: 7px;
                        background: repeating-linear-gradient(#666 0 1px, transparent 1px 2px); }
      </style>
      <div class="bar">
        <svg class="logo" viewBox="0 0 16 16"><rect width="16" height="16" rx="4" fill="#1a8ce8"/><path d="M8 2.500l2 2.500H8.800v2.300H12V6l2 2-2 2V8.700H8.800V11H10l-2 2.500L6 11h1.200V8.700H4V10L2 8l2-2v1.300h3.200V5H6z" fill="#fff"/></svg>
        <span>构件转换</span>
        <div class="close"><svg width="14" height="11" viewBox="0 0 14 11"><path d="M1 0h3l3 3 3-3h3L9 5l4 6h-3L7 7l-3 4H1l4-6z" fill="#fff"/></svg></div>
      </div>
      <div class="client">
        <div class="row"><label>转换构件:</label><div class="combo"><span>楼层框架梁</span><i></i></div></div>
        <div class="drop">
          <div class="opts">${items.map(t => `<div${t === "暗梁" ? ' class="sel"' : ""}>${t}</div>`).join("")}</div>
          <div class="sb"><span class="up"></span><span class="thumb"></span><span class="dn"></span></div>
        </div>
      </div>`;
  }
}
customElements.define("convert-dialog", ConvertDialog);

class RedMarks extends HTMLElement {
  connectedCallback() {
    if (this.shadowRoot) return;
    this.attachShadow({mode: "open"}).innerHTML = `
      <style>
        :host { position: absolute; inset: 0; z-index: 3; pointer-events: none; }
        svg { display: block; }
      </style>
      <svg width="1116" height="779" viewBox="0 0 1116 779">
        <path d="M53 11L704 418" stroke="#f00000" stroke-width="7" fill="none"/>
        <path d="M692 428L713 405 737 436z" fill="#f00000"/>
        <ellipse cx="520.500" cy="332.500" rx="20" ry="43" transform="rotate(3 520.500 332.500)" fill="none" stroke="#e80000" stroke-width="6"/>
        <rect x="744.500" y="554.500" width="98" height="28" fill="none" stroke="#f00000" stroke-width="5"/>
      </svg>`;
  }
}
customElements.define("red-marks", RedMarks);

class GldApp extends HTMLElement {
  connectedCallback() {
    if (this.shadowRoot) return;
    this.attachShadow({mode: "open"}).innerHTML = `
      <style>
        :host { display: flex; flex-direction: column; position: relative; width: 1116px; height: 779px; overflow: hidden; background: #f0f0f0; }
        .main { display: flex; flex: 1; min-height: 0; }
        .right { display: flex; flex-direction: column; flex: 1; min-width: 0; }
        ::slotted(tool-row) { flex: none; }
      </style>
      <slot name="menu"></slot>
      <slot name="top"></slot>
      <div class="main">
        <slot name="side"></slot>
        <div class="right">
          <slot name="rows"></slot>
          <slot name="canvas"></slot>
        </div>
      </div>
      <slot name="over"></slot>`;
  }
}
customElements.define("gld-app", GldApp);
</script>
</body>
</html>
